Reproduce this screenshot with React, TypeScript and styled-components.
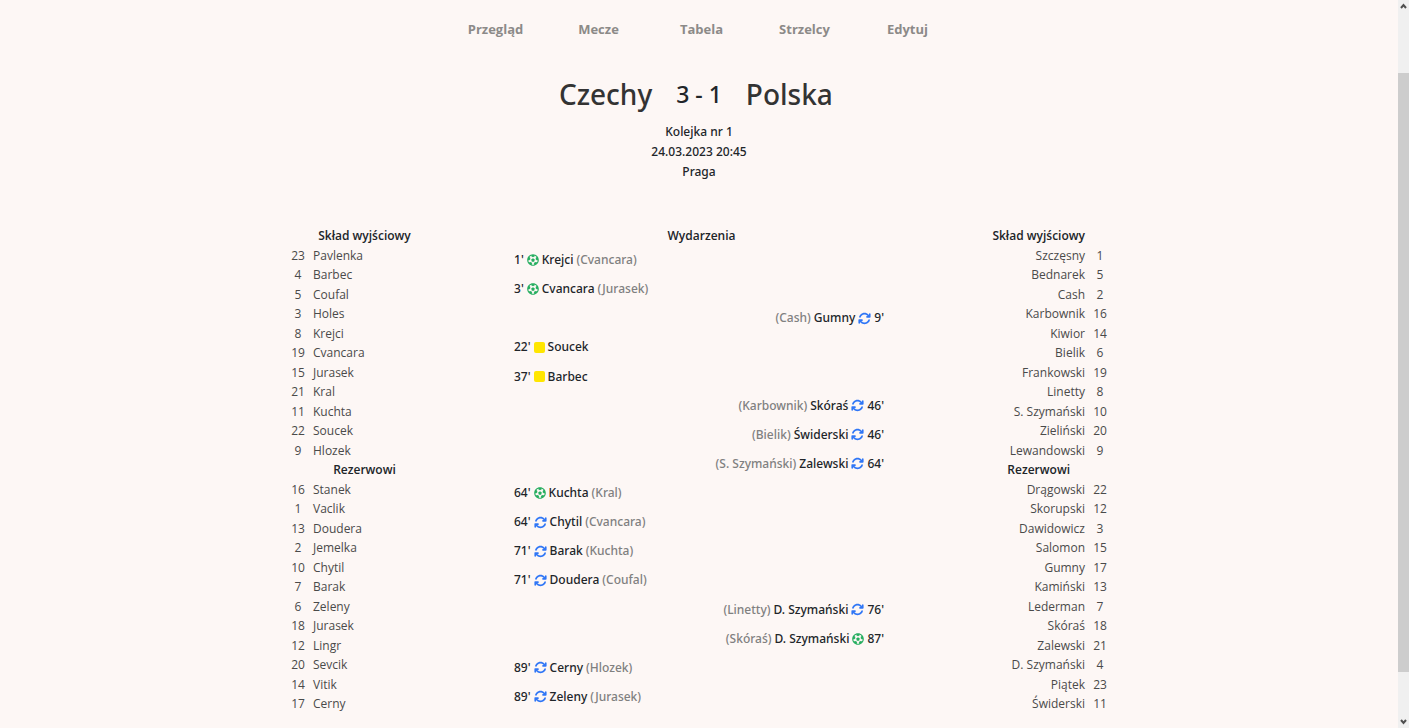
import React from 'react';
import styled, { createGlobalStyle } from 'styled-components';
import { FaFutbol } from 'react-icons/fa';
import { FaArrowsRotate } from 'react-icons/fa6';

type Side = 'home' | 'away';
type Player = [number, string];
type Kind = 'goal' | 'sub' | 'card';
interface MatchEvent {
  side: Side;
  minute: number;
  kind: Kind;
  player: string;
  other?: string;
}

const home: { starting: Player[]; bench: Player[] } = {
  starting: [
    [23, 'Pavlenka'], [4, 'Barbec'], [5, 'Coufal'], [3, 'Holes'], [8, 'Krejci'], [19, 'Cvancara'],
    [15, 'Jurasek'], [21, 'Kral'], [11, 'Kuchta'], [22, 'Soucek'], [9, 'Hlozek'],
  ],
  bench: [
    [16, 'Stanek'], [1, 'Vaclik'], [13, 'Doudera'], [2, 'Jemelka'], [10, 'Chytil'], [7, 'Barak'],
    [6, 'Zeleny'], [18, 'Jurasek'], [12, 'Lingr'], [20, 'Sevcik'], [14, 'Vitik'], [17, 'Cerny'],
  ],
};

const away: { starting: Player[]; bench: Player[] } = {
  starting: [
    [1, 'Szczęsny'], [5, 'Bednarek'], [2, 'Cash'], [16, 'Karbownik'], [14, 'Kiwior'], [6, 'Bielik'],
    [19, 'Frankowski'], [8, 'Linetty'], [10, 'S. Szymański'], [20, 'Zieliński'], [9, 'Lewandowski'],
  ],
  bench: [
    [22, 'Drągowski'], [12, 'Skorupski'], [3, 'Dawidowicz'], [15, 'Salomon'], [17, 'Gumny'], [13, 'Kamiński'],
    [7, 'Lederman'], [18, 'Skóraś'], [21, 'Zalewski'], [4, 'D. Szymański'], [23, 'Piątek'], [11, 'Świderski'],
  ],
};

const events: MatchEvent[] = [
  { side: 'home', minute: 1, kind: 'goal', player: 'Krejci', other: 'Cvancara' },
  { side: 'home', minute: 3, kind: 'goal', player: 'Cvancara', other: 'Jurasek' },
  { side: 'away', minute: 9, kind: 'sub', player: 'Gumny', other: 'Cash' },
  { side: 'home', minute: 22, kind: 'card', player: 'Soucek' },
  { side: 'home', minute: 37, kind: 'card', player: 'Barbec' },
  { side: 'away', minute: 46, kind: 'sub', player: 'Skóraś', other: 'Karbownik' },
  { side: 'away', minute: 46, kind: 'sub', player: 'Świderski', other: 'Bielik' },
  { side: 'away', minute: 64, kind: 'sub', player: 'Zalewski', other: 'S. Szymański' },
  { side: 'home', minute: 64, kind: 'goal', player: 'Kuchta', other: 'Kral' },
  { side: 'home', minute: 64, kind: 'sub', player: 'Chytil', other: 'Cvancara' },
  { side: 'home', minute: 71, kind: 'sub', player: 'Barak', other: 'Kuchta' },
  { side: 'home', minute: 71, kind: 'sub', player: 'Doudera', other: 'Coufal' },
  { side: 'away', minute: 76, kind: 'sub', player: 'D. Szymański', other: 'Linetty' },
  { side: 'away', minute: 87, kind: 'goal', player: 'D. Szymański', other: 'Skóraś' },
  { side: 'home', minute: 89, kind: 'sub', player: 'Cerny', other: 'Hlozek' },
  { side: 'home', minute: 89, kind: 'sub', player: 'Zeleny', other: 'Jurasek' },
];

const GlobalStyle = createGlobalStyle`
  * { box-sizing: border-box; }
  body {
    margin: 0;
    background: #fdf7f5;
    color: #212529;
    font: 12px "Open Sans", "Noto Sans", sans-serif;
  }
`;

const Page = styled.div`
  display: flex;
  min-height: 100vh;
`;

const Main = styled.main`
  flex: 1;
  display: flex;
  flex-direction: column;
  align-items: center;
`;

const Nav = styled.nav`
  display: grid;
  grid-template-columns: repeat(5, 103px);
  padding: 18px 0 0 5px;
`;

const NavLink = styled.a`
  color: #8c8a88;
  font-size: 13px;
  line-height: 22px;
  font-weight: 700;
  text-align: center;
  text-decoration: none;
`;

const Scoreline = styled.h1`
  display: grid;
  grid-template-columns: 1fr auto 1fr;
  align-items: center;
  column-gap: 24px;
  width: 100%;
  margin: 32px 0 0;
  font-family: "Noto Sans", sans-serif;
  font-size: 28px;
  line-height: 44px;
  font-weight: 500;
  color: #333;
`;

const Team = styled.span<{ $side: Side }>`
  text-align: ${p => (p.$side === 'home' ? 'right' : 'left')};
`;

const Score = styled.span`
  font-size: 23px;
  color: #212529;
`;

const Details = styled.div`
  margin-top: 6px;
  font-family: "Noto Sans", sans-serif;
  font-size: 12px;
  line-height: 20px;
  font-weight: 500;
  text-align: center;
`;

const Detail = styled.p`
  margin: 0;
`;

const Columns = styled.div`
  display: grid;
  grid-template-columns: 226px 1fr 221px;
  width: 822px;
  max-width: 100%;
  margin-top: 44px;
`;

const Lineup = styled.table<{ $side: Side }>`
  justify-self: ${p => (p.$side === 'home' ? 'start' : 'end')};
  align-self: start;
  border-collapse: collapse;
  line-height: 1.625;
  white-space: nowrap;
`;

const Heading = styled.th`
  padding: 0;
  font-weight: 600;
  text-align: center;
`;

const Shirt = styled.td`
  width: 20px;
  padding: 0;
  text-align: center;
  color: #4a4a4a;
`;

const Gap = styled.td`
  width: 5px;
  padding: 0;
`;

const Name = styled.td<{ $side: Side }>`
  width: ${p => (p.$side === 'home' ? 103 : 92)}px;
  padding: 0;
  text-align: ${p => (p.$side === 'home' ? 'left' : 'right')};
  color: #4a4a4a;
`;

const Events = styled.section`
  display: flex;
  flex-direction: column;
`;

const EventsTitle = styled.h2`
  margin: 0;
  font-size: 12px;
  line-height: 1.625;
  font-weight: 600;
  text-align: center;
`;

const EventList = styled.ol`
  flex: 1;
  display: grid;
  grid-auto-rows: 1fr;
  margin: 0;
  padding: 0 5px 2px 0;
  list-style: none;
  font-family: "Noto Sans", sans-serif;
  font-weight: 500;
`;

const EventRow = styled.li<{ $side: Side }>`
  display: flex;
  flex-direction: ${p => (p.$side === 'home' ? 'row' : 'row-reverse')};
  align-items: center;
  gap: 3px;
  line-height: 20px;
`;

const Other = styled.span`
  color: #808080;
`;

const GoalIcon = styled(FaFutbol)`
  width: 12px;
  height: 12px;
  color: #27ae60;
`;

const SubIcon = styled(FaArrowsRotate)`
  width: 13px;
  height: 13px;
  color: #2f76f6;
`;

const CardIcon = styled.span`
  width: 11px;
  height: 11px;
  border-radius: 2px;
  background: #ffe600;
`;

const Scrollbar = styled.div`
  position: sticky;
  top: 0;
  display: flex;
  flex-direction: column;
  align-items: center;
  width: 11px;
  height: 100vh;
  background: #f0f0f0;
`;

const ArrowIcon = styled.svg`
  width: 7px;
  height: 11px;
  margin: 1px 0;
  fill: none;
  stroke: #505050;
  stroke-width: 2;
`;

const Track = styled.div`
  flex: 1;
  display: flex;
  flex-direction: column;
  width: 100%;
`;

const TrackSpace = styled.div<{ $share: number }>`
  flex: ${p => p.$share};
`;

const Thumb = styled.div`
  flex: 599;
  background: #cdcdcd;
`;

const icons: Record<Kind, React.ReactElement> = {
  goal: <GoalIcon aria-label="Gol" />,
  sub: <SubIcon aria-label="Zmiana" />,
  card: <CardIcon role="img" aria-label="Żółta kartka" />,
};

function PlayerRow({ player: [shirt, name], side }: { player: Player; side: Side }) {
  return side === 'home' ? (
    <tr>
      <Shirt>{shirt}</Shirt>
      <Gap />
      <Name $side={side}>{name}</Name>
    </tr>
  ) : (
    <tr>
      <Name $side={side}>{name}</Name>
      <Gap />
      <Shirt>{shirt}</Shirt>
    </tr>
  );
}

function HeadingRow({ side, children }: { side: Side; children: string }) {
  return side === 'home' ? (
    <tr>
      <Shirt />
      <Gap />
      <Heading>{children}</Heading>
    </tr>
  ) : (
    <tr>
      <Heading>{children}</Heading>
      <Gap />
      <Shirt />
    </tr>
  );
}

function TeamLineup({ side, team }: { side: Side; team: typeof home }) {
  return (
    <Lineup $side={side}>
      <tbody>
        <HeadingRow side={side}>Skład wyjściowy</HeadingRow>
        {team.starting.map(p => <PlayerRow key={p[0]} player={p} side={side} />)}
        <HeadingRow side={side}>Rezerwowi</HeadingRow>
        {team.bench.map(p => <PlayerRow key={p[0]} player={p} side={side} />)}
      </tbody>
    </Lineup>
  );
}

export default function App() {
  return (
    <Page>
      <GlobalStyle />
      <Main>
        <Nav>
          {['Przegląd', 'Mecze', 'Tabela', 'Strzelcy', 'Edytuj'].map(label => (
            <NavLink key={label} href="#">{label}</NavLink>
          ))}
        </Nav>
        <Scoreline>
          <Team $side="home">Czechy</Team>
          <Score>3 - 1</Score>
          <Team $side="away">Polska</Team>
        </Scoreline>
        <Details>
          <Detail>Kolejka nr 1</Detail>
          <Detail>24.03.2023 20:45</Detail>
          <Detail>Praga</Detail>
        </Details>
        <Columns>
          <TeamLineup side="home" team={home} />
          <Events>
            <EventsTitle>Wydarzenia</EventsTitle>
            <EventList>
              {events.map((e, i) => (
                <EventRow key={i} $side={e.side}>
                  <span>{e.minute}'</span>
                  {icons[e.kind]}
                  <span>{e.player}</span>
                  {e.other && <Other>({e.other})</Other>}
                </EventRow>
              ))}
            </EventList>
          </Events>
          <TeamLineup side="away" team={away} />
        </Columns>
      </Main>
      <Scrollbar aria-hidden="true">
        <ArrowIcon viewBox="0 0 7 11"><path d="M1 7l2.500-3 2.500 3" /></ArrowIcon>
        <Track>
          <TrackSpace $share={60} />
          <Thumb />
          <TrackSpace $share={43} />
        </Track>
        <ArrowIcon viewBox="0 0 7 11"><path d="M1 4l2.500 3 2.500-3" /></ArrowIcon>
      </Scrollbar>
    </Page>
  );
}
